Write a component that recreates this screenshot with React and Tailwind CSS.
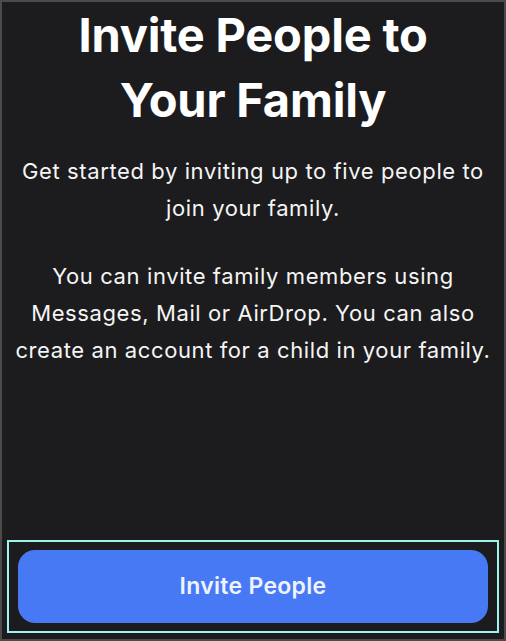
// Family Sharing invite screen
export default function App() {
  return (
    <div
      className="flex h-[641px] w-[506px] flex-col border-2 border-[#4b4b4b] bg-[#1c1c1e] text-center text-[#f5f5f5]"
      style={{ fontFamily: 'Inter, "Noto Sans", sans-serif' }}
    >
      <h1 className="text-[47px] font-bold leading-[65px] tracking-[-0.2px] text-white">
        Invite People to
        <br />
        Your Family
      </h1>

      <div className="mt-[21px] px-[10px] text-[22px] leading-[37px] tracking-[0.6px]">
        <p>
          Get started by inviting up to five people to
          <br />
          join your family.
        </p>
        <p className="mt-[31px]">
          You can invite family members using
          <br />
          Messages, Mail or AirDrop. You can also
          <br />
          create an account for a child in your family.
        </p>
      </div>

      <div className="mt-auto px-[5px] pb-[6px]">
        <div className="border-2 border-[#9ef3ee] px-[9px] py-[8px]">
          <button className="flex h-[73px] w-full items-center justify-center rounded-[17px] bg-[#4879f5] text-[23px] font-semibold tracking-[0.3px] text-[#eef3ff]">
            Invite People
          </button>
        </div>
      </div>
    </div>
  );
}
